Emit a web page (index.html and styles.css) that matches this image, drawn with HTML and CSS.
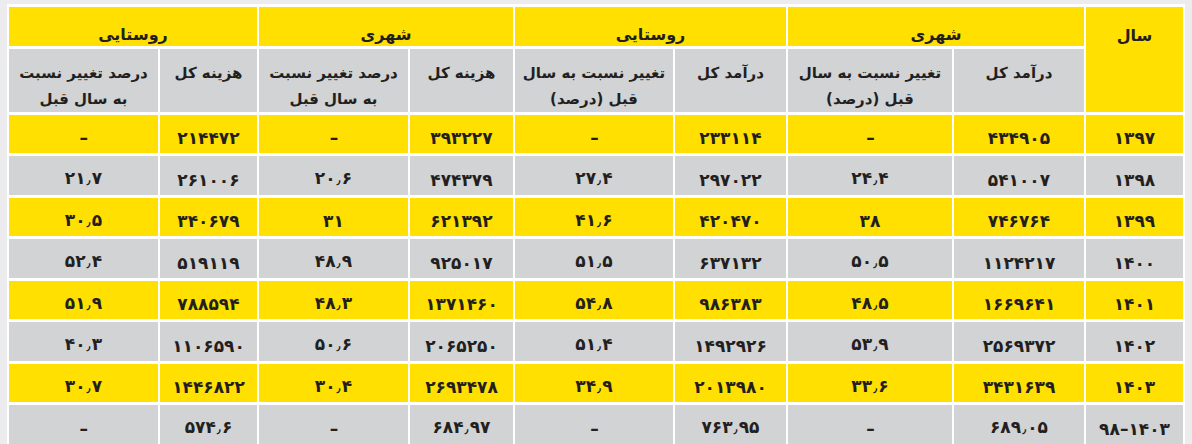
FILE: index.html
```html
<!DOCTYPE html>
<html lang="fa" dir="rtl">
<head>
<meta charset="utf-8">
<link rel="stylesheet" href="styles.css">
</head>
<body>
<table class="data">
  <colgroup>
    <col class="c-year">
    <col class="c-ui">
    <col class="c-uic">
    <col class="c-ri">
    <col class="c-ric">
    <col class="c-uc">
    <col class="c-ucc">
    <col class="c-rc">
    <col class="c-rcc">
  </colgroup>
  <thead>
    <tr class="h1">
      <th rowspan="2" class="year-head">سال</th>
      <th colspan="2">شهری</th>
      <th colspan="2">روستایی</th>
      <th colspan="2">شهری</th>
      <th colspan="2">روستایی</th>
    </tr>
    <tr class="h2">
      <th>درآمد کل</th>
      <th>تغییر نسبت به سال<br>قبل (درصد)</th>
      <th>درآمد کل</th>
      <th>تغییر نسبت به سال<br>قبل (درصد)</th>
      <th>هزینه کل</th>
      <th>درصد تغییر نسبت<br>به سال قبل</th>
      <th>هزینه کل</th>
      <th>درصد تغییر نسبت<br>به سال قبل</th>
    </tr>
  </thead>
  <tbody>
    <tr class="y"><td>۱۳۹۷</td><td>۴۳۴۹۰۵</td><td>–</td><td>۲۳۳۱۱۴</td><td>–</td><td>۳۹۳۲۲۷</td><td>–</td><td>۲۱۴۴۷۲</td><td>–</td></tr>
    <tr class="g"><td>۱۳۹۸</td><td>۵۴۱۰۰۷</td><td>۲۴<span class="dec">٫</span>۴</td><td>۲۹۷۰۲۲</td><td>۲۷<span class="dec">٫</span>۴</td><td>۴۷۴۳۷۹</td><td>۲۰<span class="dec">٫</span>۶</td><td>۲۶۱۰۰۶</td><td>۲۱<span class="dec">٫</span>۷</td></tr>
    <tr class="y"><td>۱۳۹۹</td><td>۷۴۶۷۶۴</td><td>۳۸</td><td>۴۲۰۴۷۰</td><td>۴۱<span class="dec">٫</span>۶</td><td>۶۲۱۳۹۲</td><td>۳۱</td><td>۳۴۰۶۷۹</td><td>۳۰<span class="dec">٫</span>۵</td></tr>
    <tr class="g"><td>۱۴۰۰</td><td>۱۱۲۴۲۱۷</td><td>۵۰<span class="dec">٫</span>۵</td><td>۶۳۷۱۳۲</td><td>۵۱<span class="dec">٫</span>۵</td><td>۹۲۵۰۱۷</td><td>۴۸<span class="dec">٫</span>۹</td><td>۵۱۹۱۱۹</td><td>۵۲<span class="dec">٫</span>۴</td></tr>
    <tr class="y"><td>۱۴۰۱</td><td>۱۶۶۹۶۴۱</td><td>۴۸<span class="dec">٫</span>۵</td><td>۹۸۶۳۸۳</td><td>۵۴<span class="dec">٫</span>۸</td><td>۱۳۷۱۴۶۰</td><td>۴۸<span class="dec">٫</span>۳</td><td>۷۸۸۵۹۴</td><td>۵۱<span class="dec">٫</span>۹</td></tr>
    <tr class="g"><td>۱۴۰۲</td><td>۲۵۶۹۳۷۲</td><td>۵۳<span class="dec">٫</span>۹</td><td>۱۴۹۲۹۲۶</td><td>۵۱<span class="dec">٫</span>۴</td><td>۲۰۶۵۲۵۰</td><td>۵۰<span class="dec">٫</span>۶</td><td>۱۱۰۶۵۹۰</td><td>۴۰<span class="dec">٫</span>۳</td></tr>
    <tr class="y"><td>۱۴۰۳</td><td>۳۴۳۱۶۳۹</td><td>۳۳<span class="dec">٫</span>۶</td><td>۲۰۱۳۹۸۰</td><td>۳۴<span class="dec">٫</span>۹</td><td>۲۶۹۳۴۷۸</td><td>۳۰<span class="dec">٫</span>۴</td><td>۱۴۴۶۸۲۲</td><td>۳۰<span class="dec">٫</span>۷</td></tr>
    <tr class="g"><td>۱۴۰۳–۹۸</td><td>۶۸۹<span class="dec">٫</span>۰۵</td><td>–</td><td>۷۶۳<span class="dec">٫</span>۹۵</td><td>–</td><td>۶۸۴<span class="dec">٫</span>۹۷</td><td>–</td><td>۵۷۴<span class="dec">٫</span>۶</td><td>–</td></tr>
  </tbody>
</table>
</body>
</html>
```

FILE: styles.css
```css
html, body {
  margin: 0;
  padding: 0;
  background: #ececee;
}

body {
  padding: 4px 7px 0 7px;
  font-family: "DejaVu Sans", "Noto Sans", sans-serif;
  color: #231f20;
}

.data {
  table-layout: fixed;
  width: 1178px;
  border-collapse: separate;
  border-spacing: 2px 3px;
  background: #ffffff;
}

.c-year { width: 97px; }
.c-ui   { width: 130px; }
.c-uic  { width: 164px; }
.c-ri   { width: 111px; }
.c-ric  { width: 158px; }
.c-uc   { width: 103px; }
.c-ucc  { width: 149px; }
.c-rc   { width: 97px; }
.c-rcc  { width: 149px; }

.data th,
.data td {
  padding: 0;
  text-align: center;
  font-weight: bold;
}

.h1 { height: 39px; }

.h1 th {
  background: #ffe000;
  font-size: 16px;
  line-height: 20px;
  vertical-align: bottom;
  padding-bottom: 1px;
}

.h1 th.year-head {
  vertical-align: top;
  padding-top: 19px;
  padding-bottom: 0;
}

.h2 { height: 63px; }

.h2 th {
  background: #d1d3d4;
  font-size: 15px;
  line-height: 25.5px;
  vertical-align: top;
  padding-top: 12px;
}

.data td {
  font-size: 17px;
  line-height: 20px;
  letter-spacing: -0.8px;
  vertical-align: middle;
  padding-top: 8px;
}

.dec {
  font-size: 11px;
  letter-spacing: 0;
  padding: 0 1px;
}

.y { height: 38px; }
.g { height: 39px; }

.y td { background: #ffe000; }
.g td { background: #d1d3d4; }
```
